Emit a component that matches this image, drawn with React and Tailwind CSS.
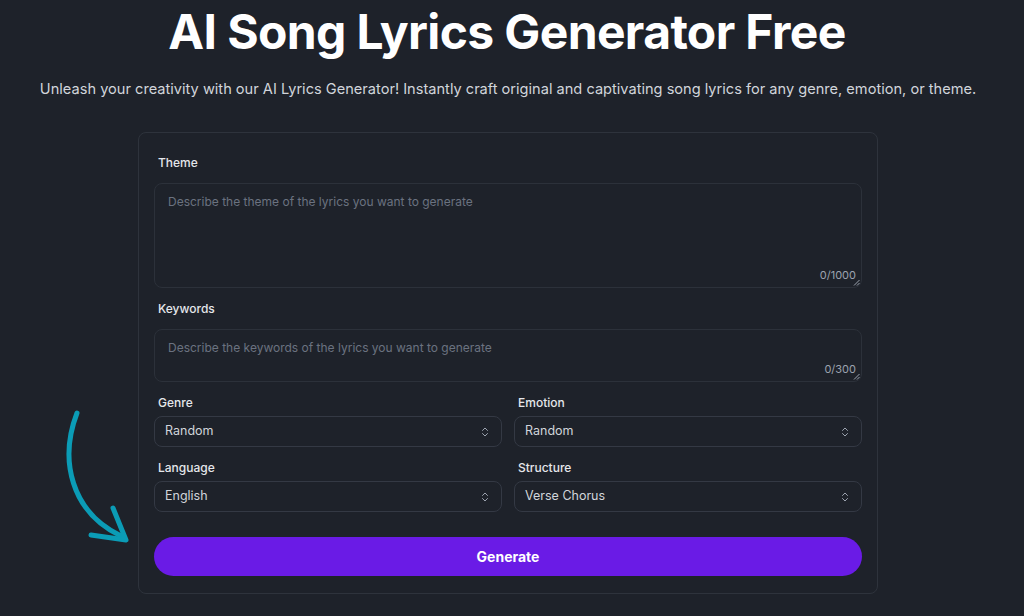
import { ChevronsUpDown } from 'lucide-react';

const SELECTS = [
    [
        { label: 'Genre', value: 'Random' },
        { label: 'Emotion', value: 'Random' },
    ],
    [
        { label: 'Language', value: 'English' },
        { label: 'Structure', value: 'Verse Chorus' },
    ],
];

function Select({ label, value }) {
    return (
        <div className="flex flex-col">
            <label className="text-[12px] font-medium text-[#e5e7eb] pl-1 mb-[5px] leading-[16px]">{label}</label>
            <div className="h-[31px] rounded-lg border border-[#343944] bg-[#1e222a] flex items-center justify-between pl-[10px] pr-[10px]">
                <span className="text-[12.5px] text-[#d1d5db]">{value}</span>
                <ChevronsUpDown className="w-[12px] h-[12px] text-[#9ca3af]" strokeWidth={2} />
            </div>
        </div>
    );
}

function Area({ label, placeholder, count, height }) {
    return (
        <div className="flex flex-col">
            <label className="text-[12px] font-medium text-[#e5e7eb] pl-1 mb-[12px] leading-[16px]">{label}</label>
            <div className={`relative rounded-lg border border-[#2c313a] bg-[#1e222a] ${height}`}>
                <p className="text-[12px] text-[#6b7280] pl-[13px] pt-[9px]">{placeholder}</p>
                <span className="absolute right-[5px] bottom-[5px] text-[11px] leading-[14px] text-[#9ca3af]">{count}</span>
                <svg width="7" height="7" viewBox="0 0 7 7" className="absolute right-[1px] bottom-[1px]" fill="none" stroke="#9ca3af" strokeWidth="1">
                    <path d="M6.5 1 L1 6.5 M6.5 4 L4 6.5" />
                </svg>
            </div>
        </div>
    );
}

export default function App() {
    return (
        <div className="relative w-[1024px] h-[616px] overflow-hidden bg-[#1e222a]" style={{ fontFamily: 'Inter, "Noto Sans", sans-serif' }}>
            <div className="flex flex-col items-center">
                <h1 className="mt-[8px] -ml-[10px] text-[48px] leading-[48px] font-bold tracking-[-0.013em] text-white">AI Song Lyrics Generator Free</h1>
                <p className="mt-[22px] -ml-[8px] text-[14.6px] leading-[22px] text-[#d1d5db]">
                    Unleash your creativity with our AI Lyrics Generator! Instantly craft original and captivating song lyrics for any genre, emotion, or theme.
                </p>
            </div>

            {/* Form card */}
            <div className="ml-[138px] mt-[32px] w-[740px] h-[462px] rounded-lg border border-[#2e333c] px-[15px] pt-[22px]">
                <div className="flex flex-col gap-[13px]">
                    <Area label="Theme" placeholder="Describe the theme of the lyrics you want to generate" count="0/1000" height="h-[105px]" />
                    <Area label="Keywords" placeholder="Describe the keywords of the lyrics you want to generate" count="0/300" height="h-[53px]" />
                </div>
                <div className="mt-[13px] flex flex-col gap-[13px]">
                    {SELECTS.map((row, i) => (
                        <div key={i} className="grid grid-cols-2 gap-[12px]">
                            {row.map((s) => (
                                <Select key={s.label} {...s} />
                            ))}
                        </div>
                    ))}
                </div>
                <button className="mt-[25px] w-full h-[39px] rounded-full bg-[#6a1be6] text-white text-[14px] font-bold">
                    Generate
                </button>
            </div>

            {/* Decorative arrow */}
            <svg className="absolute left-[55px] top-[400px]" width="90" height="150" viewBox="0 0 90 150" fill="none">
                <path d="M22 13 C 4 60, 16 112, 66 136" stroke="#0b9cb6" strokeWidth="5" strokeLinecap="round" />
                <path d="M58 108 L71 140 L36 135" stroke="#0b9cb6" strokeWidth="5" strokeLinecap="round" strokeLinejoin="round" />
            </svg>
        </div>
    );
}
